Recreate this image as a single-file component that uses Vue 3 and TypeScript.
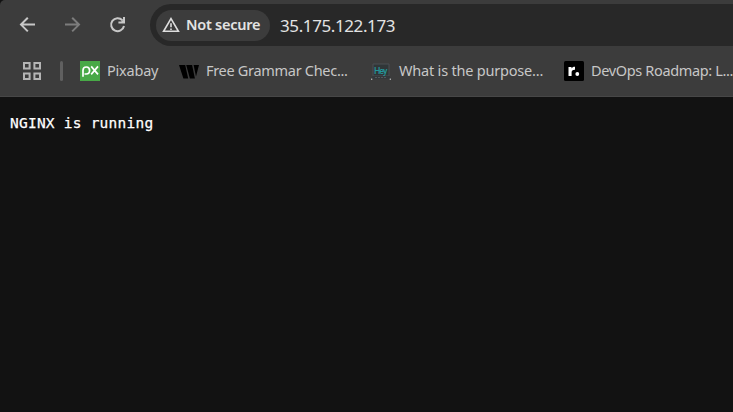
<script setup lang="ts">
interface Bookmark {
  id: string
  label: string
}

const address = '35.175.122.173'
const bookmarks: Bookmark[] = [
  { id: 'pixabay', label: 'Pixabay' },
  { id: 'grammar', label: 'Free Grammar Chec...' },
  { id: 'purpose', label: 'What is the purpose...' },
  { id: 'devops', label: 'DevOps Roadmap: L...' },
]
</script>

<template>
  <div class="browser">
    <header class="toolbar">
      <nav class="nav">
        <svg class="icon" viewBox="0 0 20 20"><path d="M17 9.6H3.5M9.8 2.8L3 9.6l6.8 6.8" /></svg>
        <svg class="icon dim" viewBox="0 0 20 20"><path d="M2 9.6h13.5M9.2 2.8L16 9.6l-6.8 6.8" /></svg>
        <svg class="icon" viewBox="0 0 20 20">
          <path d="M16 11A6.5 6.5 0 1 1 14.4 5.2" />
          <path class="solid" d="M17 2v6.6h-6.6v-2h2.8l1.8-1.8V2z" />
        </svg>
      </nav>
      <div class="omnibox">
        <div class="chip">
          <svg class="warning" viewBox="0 0 18 16">
            <path d="M9 1.7L16.4 14.3H1.6z" />
            <path d="M9 6.2v4M9 11.4v1.6" />
          </svg>
          <span class="chip-text">Not secure</span>
        </div>
        <span class="address">{{ address }}</span>
      </div>
    </header>

    <div class="bookmarks">
      <svg class="apps" viewBox="0 0 18 18">
        <path d="M1 1h5.6v5.6H1zM11.4 1H17v5.6h-5.6zM1 11.4h5.6V17H1zM11.4 11.4H17V17h-5.6z" />
      </svg>
      <span class="divider"></span>
      <div v-for="b in bookmarks" :key="b.id" class="bookmark" :class="b.id">
        <svg v-if="b.id === 'pixabay'" class="fav" viewBox="0 0 20 20">
          <path fill="#48a947" d="M0 0h20v20H0z" />
          <g fill="none" stroke="#fff" stroke-width="1.7">
            <path d="M3 15.7V9.3a3.3 3.5 0 1 1 3.3 3.7H4.5" />
            <path d="M11.2 5.4l6.8 8M18 5.4l-6.8 8" />
          </g>
        </svg>
        <svg v-else-if="b.id === 'grammar'" class="fav" viewBox="0 0 20 20">
          <path fill="#000" d="M0 4h6.2l3 13.5H4.4zM7.2 4h5.9l2.8 13.5h-5zM14.6 4H20l-3 11.5z" />
        </svg>
        <svg v-else-if="b.id === 'purpose'" class="fav" viewBox="0 0 20 20">
          <path fill="#303638" stroke="#4b4f52" stroke-width="1" d="M2 3h16v12H2z" />
          <path fill="#34383b" d="M1.5 15h17l1 3H.5z" />
          <path stroke="#596164" stroke-width=".8" d="M4 16.5h12" stroke-dasharray="2 1" />
          <path fill="#aaa" d="M0 17.5h1.3V19H0zM18.7 17.5H20V19h-1.3z" />
          <text x="3" y="13" textLength="13.5" class="hey">Hey</text>
        </svg>
        <svg v-else class="fav" viewBox="0 0 20 20">
          <rect width="20" height="20" rx="1.5" fill="#000" />
          <path fill="#fff" d="M4.5 6h3v1.5C8.3 6.2 9.4 5.7 11 5.8v2.9c-2.3-.1-3.4.7-3.4 2.8V15H4.5z" />
          <circle cx="13.3" cy="13" r="1.9" fill="#fff" />
        </svg>
        <span class="label">{{ b.label }}</span>
      </div>
    </div>

    <main class="page">NGINX is running</main>
  </div>
</template>

<style>
body {
  background: #121212;
  overflow: hidden;
}
</style>

<style scoped>
.browser {
  width: 733px;
  height: 412px;
  overflow: hidden;
  background: #121212;
  font-family: 'Noto Sans', 'Open Sans', sans-serif;
  white-space: nowrap;
}
.toolbar {
  display: flex;
  box-sizing: border-box;
  height: 46px;
  padding-top: 4px;
  background: #3c3c3c;
  border-top-left-radius: 5px;
}
.nav {
  display: flex;
  flex: none;
  gap: 25px;
  width: 132px;
  padding: 11px 0 0 18px;
}
.icon {
  flex: none;
  width: 20px;
  height: 20px;
  fill: none;
  stroke: #c7c7c7;
  stroke-width: 2;
}
.icon.dim {
  stroke: #7c7c7c;
}
.icon .solid {
  fill: #c7c7c7;
  stroke: none;
}
.omnibox {
  display: flex;
  flex: 1;
  align-items: center;
  box-sizing: border-box;
  height: 42px;
  padding-left: 6px;
  background: #282828;
  border-radius: 21px 0 0 21px;
}
.chip {
  display: flex;
  flex: none;
  align-items: center;
  gap: 6px;
  box-sizing: border-box;
  width: 114px;
  height: 31px;
  padding-left: 6px;
  background: #3c3c3c;
  border-radius: 16px;
}
.warning {
  flex: none;
  width: 18px;
  height: 16px;
  fill: none;
  stroke: #dedede;
  stroke-width: 1.6;
}
.chip-text {
  padding-bottom: 2px;
  color: #e3e3e3;
  font-size: 14.5px;
  font-weight: 600;
  letter-spacing: -0.25px;
}
.address {
  margin-left: 10px;
  color: #e3e3e3;
  font-size: 17px;
  letter-spacing: -0.4px;
}
.bookmarks {
  display: flex;
  align-items: center;
  box-sizing: border-box;
  height: 51px;
  padding-left: 23px;
  background: #3c3c3c;
  border-bottom: 1px solid #474747;
}
.apps {
  flex: none;
  width: 18px;
  height: 18px;
  fill: none;
  stroke: #b5b5b5;
  stroke-width: 2;
}
.divider {
  flex: none;
  width: 3px;
  height: 20px;
  margin: 0 17px 0 19px;
  background: #606060;
  border-radius: 2px;
}
.bookmark {
  display: flex;
  flex: none;
  align-items: center;
  gap: 7px;
  width: 99px;
}
.grammar {
  width: 192px;
}
.purpose {
  width: 193px;
}
.devops {
  width: 169px;
}
.fav {
  flex: none;
  width: 20px;
  height: 20px;
}
.hey {
  fill: #24969b;
  font: 500 9px 'Roboto', sans-serif;
}
.label {
  padding-bottom: 2px;
  color: #c7c7c7;
  font-size: 14.5px;
  letter-spacing: -0.22px;
}
.grammar .label {
  letter-spacing: -0.3px;
}
.purpose .label {
  padding-left: 1px;
  letter-spacing: -0.2px;
}
.devops .label {
  letter-spacing: -0.35px;
}
.page {
  padding: 16px 10px;
  color: #fff;
  font: 14.5px/20px 'DejaVu Sans Mono', monospace;
  letter-spacing: 0.23px;
  -webkit-text-stroke: 0.25px #fff;
}
</style>
